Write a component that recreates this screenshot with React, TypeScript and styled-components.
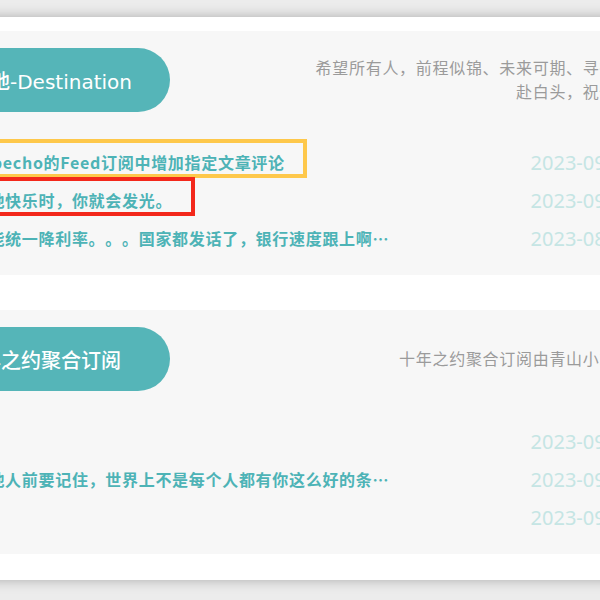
import React from "react";
import styled, { createGlobalStyle } from "styled-components";

const GlobalStyle = createGlobalStyle`
  html, body {
    margin: 0;
    padding: 0;
    background: #ececec;
    overflow: hidden;
  }
  body {
    font-family: "Noto Sans", "Noto Sans CJK SC", sans-serif;
    text-spacing-trim: space-all;
  }
`;

const Page = styled.div`
  width: 600px;
  height: 600px;
  overflow: hidden;
  padding-top: 17px;
  box-sizing: border-box;
`;

const Sheet = styled.div`
  width: 1000px;
  margin-left: -200px;
  background: #ffffff;
  box-shadow: 0 0 12px rgba(0, 0, 0, 0.28);
  padding: 14px 0 26px 70px;
  box-sizing: border-box;
  display: flex;
  flex-direction: column;
  gap: 35px;
`;

const Card = styled.section`
  width: 900px;
  background: #f7f7f7;
  padding: 17px 0 18px;
  box-sizing: border-box;
`;

const Header = styled.header`
  display: flex;
  align-items: center;
  justify-content: space-between;
  padding: 0 87px 0 42px;
`;

const Pill = styled.h2`
  margin: 0;
  width: 258px;
  height: 64px;
  border-radius: 32px;
  background: #55b5b8;
  color: #ffffff;
  display: flex;
  align-items: center;
  justify-content: center;
  font-family: "DejaVu Sans", "Noto Sans CJK SC", sans-serif;
  font-size: 20px;
  font-weight: 500;
  white-space: nowrap;
`;

const Desc = styled.p`
  margin: 0;
  text-align: right;
  color: #9b9b9b;
  font-size: 16px;
  letter-spacing: 0.7px;
  line-height: 24px;
  white-space: nowrap;
`;

const List = styled.ul`
  list-style: none;
  margin: 31px 0 0;
  padding: 0 135px 0 85px;
`;

const Row = styled.li`
  height: 38px;
  display: flex;
  align-items: center;
`;

const TitleCell = styled.div`
  flex: 0 0 436px;
  width: 436px;
  min-width: 0;
  align-self: stretch;
  position: relative;
  display: flex;
  align-items: center;
`;

const TitleText = styled.span`
  display: block;
  flex: 1 1 auto;
  min-width: 0;
  white-space: nowrap;
  overflow: hidden;
  text-overflow: ellipsis;
  color: #4db3b6;
  font-family: "Noto Sans CJK SC", sans-serif;
  font-size: 16px;
  font-weight: 700;
  letter-spacing: 0.7px;
`;

const Highlight = styled.span<{ $color: string; $width: number }>`
  position: absolute;
  left: -20px;
  top: -4px;
  bottom: 3px;
  width: ${(p) => p.$width}px;
  border: 4px solid ${(p) => p.$color};
  box-sizing: border-box;
  pointer-events: none;
`;

const DateText = styled.time`
  margin-left: auto;
  color: #c5e5e4;
  font-size: 20px;
  white-space: nowrap;
`;

type Post = {
  title: string;
  date: string;
  mark?: { color: string; width: number };
};

type Feed = {
  name: string;
  desc: React.ReactNode;
  posts: Post[];
};

const feeds: Feed[] = [
  {
    name: "目的地-Destination",
    desc: (
      <>
        希望所有人，前程似锦、未来可期、寻得良人、共
        <br />
        赴白头，祝你平安喜乐
      </>
    ),
    posts: [
      {
        title: "在Typecho的Feed订阅中增加指定文章评论",
        date: "2023-09-18",
        mark: { color: "#fec84b", width: 372 },
      },
      {
        title: "尽情地快乐时，你就会发光。",
        date: "2023-09-08",
        mark: { color: "#f3281b", width: 260 },
      },
      {
        title: "能不能统一降利率。。。国家都发话了，银行速度跟上啊，别再拖了",
        date: "2023-08-25",
      },
    ],
  },
  {
    name: "十年之约聚合订阅",
    desc: "十年之约聚合订阅由青山小站提供支持",
    posts: [
      { title: "", date: "2023-09-20" },
      {
        title: "批评他人前要记住，世界上不是每个人都有你这么好的条件。",
        date: "2023-09-12",
      },
      { title: "", date: "2023-09-01" },
    ],
  },
];

function FeedCard({ feed }: { feed: Feed }) {
  return (
    <Card>
      <Header>
        <Pill>{feed.name}</Pill>
        <Desc>{feed.desc}</Desc>
      </Header>
      <List>
        {feed.posts.map((post, i) => (
          <Row key={i}>
            <TitleCell>
              <TitleText>{post.title}</TitleText>
              {post.mark && (
                <Highlight $color={post.mark.color} $width={post.mark.width} />
              )}
            </TitleCell>
            <DateText>{post.date}</DateText>
          </Row>
        ))}
      </List>
    </Card>
  );
}

export default function App() {
  return (
    <>
      <GlobalStyle />
      <Page lang="zh-CN">
        <Sheet>
          {feeds.map((feed) => (
            <FeedCard key={feed.name} feed={feed} />
          ))}
        </Sheet>
      </Page>
    </>
  );
}
